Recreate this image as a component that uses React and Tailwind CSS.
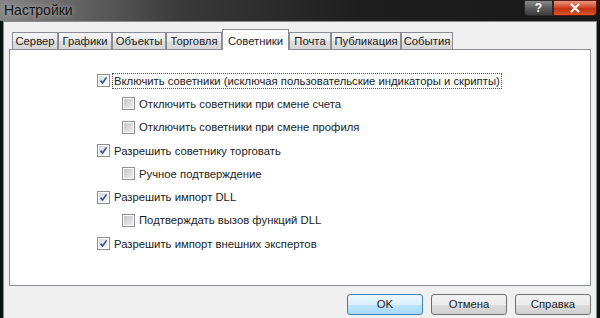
import React from "react";

const tabs = [
  { label: "Сервер", w: "w-[46px]" },
  { label: "Графики", w: "w-[54px]" },
  { label: "Объекты", w: "w-[54px]" },
  { label: "Торговля", w: "w-[56px]" },
  { label: "Советники", w: "w-[67px]", active: true },
  { label: "Почта", w: "w-[42px]" },
  { label: "Публикация", w: "w-[70px]" },
  { label: "События", w: "w-[52px]" },
];

const options = [
  { text: "Включить советники (исключая пользовательские индикаторы и скрипты)", checked: true, focus: true },
  { text: "Отключить советники при смене счета", sub: true },
  { text: "Отключить советники при смене профиля", sub: true },
  { text: "Разрешить советнику торговать", checked: true },
  { text: "Ручное подтверждение", sub: true },
  { text: "Разрешить импорт DLL", checked: true },
  { text: "Подтверждать вызов функций DLL", sub: true },
  { text: "Разрешить импорт внешних экспертов", checked: true },
];

function CheckBox({ checked }) {
  return (
    <div className="w-[13px] h-[13px] border border-[#8e8f8f] bg-white p-[1px] shrink-0">
      <div
        className={`w-full h-full relative ${
          checked
            ? "bg-[linear-gradient(135deg,#cfd3d8_0%,#eef0f2_60%,#fbfbfb_100%)]"
            : "bg-[linear-gradient(135deg,#c4c4c4_0%,#dedede_60%,#ececec_100%)]"
        }`}
      >
        {checked && (
          <svg viewBox="0 0 9 9" className="absolute inset-0 w-[9px] h-[9px]">
            <path d="M1.5 4.6 L3.6 7 L7.6 1.4" fill="none" stroke="#3b4f8a" strokeWidth="1.6" />
          </svg>
        )}
      </div>
    </div>
  );
}

function Button({ children, primary }) {
  return (
    <button
      className={`w-[76px] h-[21px] rounded-[3px] border text-[11.3px] text-[#1c1c1c] ${
        primary
          ? "border-[#3c7fb1] bg-[linear-gradient(180deg,#eaf6fd_0%,#d9f0fc_50%,#bee6fd_51%,#a7d9f5_100%)]"
          : "border-[#707070] bg-[linear-gradient(180deg,#f2f2f2_0%,#ebebeb_50%,#dddddd_51%,#cfcfcf_100%)]"
      }`}
    >
      {children}
    </button>
  );
}

export default function App() {
  return (
    <div className="w-[600px] h-[318px] overflow-hidden bg-[#0b1411] flex flex-col font-['Liberation_Sans',Arial,sans-serif]">
      {/* Title bar */}
      <div className="h-[21px] flex bg-[linear-gradient(90deg,#858585_0%,#6a6a6a_10%,#3a3a3a_30%,#1e1e1e_60%,#181818_100%)]">
        <div className="flex-1 pl-[4px] pt-[2px] text-[14px] text-[#151515] leading-[17px] [text-shadow:0_0_6px_rgba(255,255,255,0.6)]">
          Настройки
        </div>
        <div className="flex self-start mr-[3px]">
          <div className="w-[29px] h-[16px] rounded-bl-[4px] border border-[#2a2a2a] bg-[linear-gradient(180deg,#8a8a8a_0%,#5c5c5c_50%,#3e3e3e_100%)] flex items-center justify-center text-white text-[12px] font-bold leading-none">
            ?
          </div>
          <div className="w-[44px] h-[16px] rounded-br-[4px] border border-[#5a1a10] bg-[linear-gradient(180deg,#e89a84_0%,#d04a2a_45%,#c0300f_55%,#d9572c_100%)] flex items-center justify-center">
            <svg viewBox="0 0 12 10" className="w-[12px] h-[10px]">
              <path d="M2 1 L10 9 M10 1 L2 9" stroke="#fff" strokeWidth="2.2" />
            </svg>
          </div>
        </div>
      </div>

      {/* Window body */}
      <div className="flex-1 mx-[3px] border border-[#8a8a8a] border-b-0 bg-[#f0f0f0] px-[5px] pt-[7px]">
        {/* Tabs */}
        <div className="h-[20px] flex items-end pl-[3px] relative z-10">
          {tabs.map((t) =>
            t.active ? (
              <div
                key={t.label}
                className={`${t.w} h-[21px] -mb-[1px] bg-white border border-b-0 border-[#898c95] text-[11.3px] text-[#1c1c1c] flex items-start justify-center pt-[3px]`}
              >
                {t.label}
              </div>
            ) : (
              <div
                key={t.label}
                className={`${t.w} h-[17px] border border-b-0 border-[#898c95] bg-[linear-gradient(180deg,#f4f4f4_0%,#ebebeb_50%,#dddddd_51%,#d6d6d6_100%)] text-[11.3px] text-[#1c1c1c] flex items-center justify-center`}
              >
                {t.label}
              </div>
            )
          )}
        </div>

        {/* Panel */}
        <div className="h-[237px] border border-[#898c95] bg-white pt-[19px] pl-[87px]">
          {options.map((o) => (
            <div
              key={o.text}
              className={`h-[23.3px] flex items-center ${o.sub ? "pl-[25px]" : ""}`}
            >
              <CheckBox checked={o.checked} />
              <span
                className={`ml-[2px] px-[1px] text-[11.3px] leading-[14px] text-[#1c1c1c] border border-dotted ${
                  o.focus ? "border-[#555]" : "border-transparent"
                }`}
              >
                {o.text}
              </span>
            </div>
          ))}
        </div>

        {/* Buttons */}
        <div className="flex justify-end gap-[8px] mt-[8px]">
          <Button primary>OK</Button>
          <Button>Отмена</Button>
          <Button>Справка</Button>
        </div>
      </div>
    </div>
  );
}
